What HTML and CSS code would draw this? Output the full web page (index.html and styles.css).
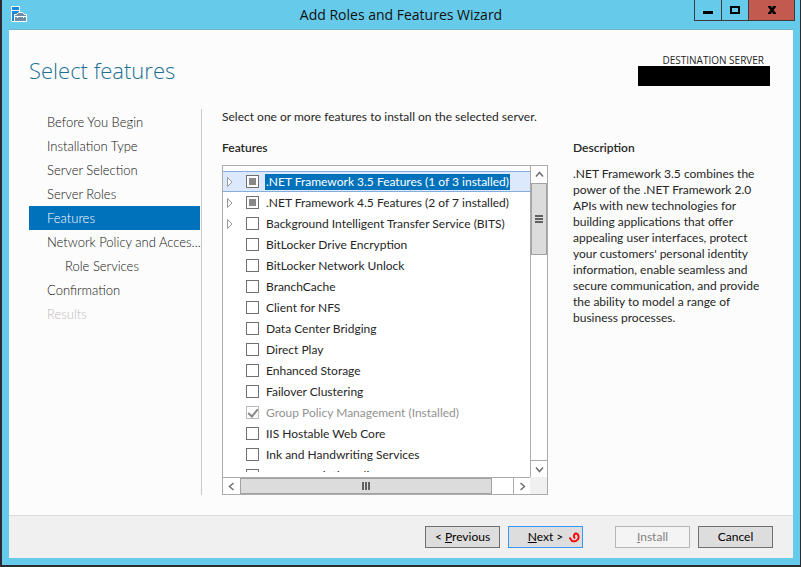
FILE: index.html
```html
<!DOCTYPE html>
<html lang="en">
<head>
    <meta charset="UTF-8">
    <meta name="viewport" content="width=device-width, initial-scale=1.0">
    <title>Add Roles and Features Wizard</title>
    <link rel="stylesheet" href="styles.css">
</head>
<body>
    <div class="window">
        <header class="titlebar">
            <svg class="app-icon" width="16" height="16" viewBox="0 0 16 16">
                <path d="M0.5 0.5H8.5V15.5H0.5Z" fill="#1e86dc" stroke="#fff"/>
                <path d="M1 4.5H8" stroke="#fff"/>
                <path d="M3.5 15.5V8.5H5.5L7.500 6.500H11.500L13.500 8.500H15.5V15.5Z" fill="#6f8ca3" stroke="#fff"/>
                <path d="M4 10.500H15" stroke="#fff"/>
                <path d="M6.5 10V12M12.5 10V12" stroke="#fff"/>
            </svg>
            <h1>Add Roles and Features Wizard</h1>
            <div class="window-buttons">
                <button type="button" aria-label="Minimize">
                    <svg width="10" height="10"><path d="M0 6H10V9H0Z"/></svg>
                </button>
                <button type="button" aria-label="Maximize">
                    <svg width="10" height="10"><path d="M1 2H9V8H1Z" fill="none" stroke="#000" stroke-width="2"/></svg>
                </button>
                <button type="button" class="close" aria-label="Close">
                    <svg width="10" height="10"><path d="M1 1H4L5 3L6 1H9V2L6.500 5L9 8V9H6L5 7L4 9H1V8L3.500 5L1 2Z"/></svg>
                </button>
            </div>
        </header>

        <main class="wizard">
            <div class="page-header">
                <h2>Select features</h2>
                <div class="destination">
                    <span>DESTINATION SERVER</span>
                    <div class="server-name"></div>
                </div>
            </div>

            <div class="columns">
                <nav class="steps">
                    <a href="#">Before You Begin</a>
                    <a href="#">Installation Type</a>
                    <a href="#">Server Selection</a>
                    <a href="#">Server Roles</a>
                    <a href="#" class="active">Features</a>
                    <a href="#">Network Policy and Acces...</a>
                    <a href="#" class="sub">Role Services</a>
                    <a href="#">Confirmation</a>
                    <a href="#" class="disabled">Results</a>
                </nav>

                <section class="features">
                    <p>Select one or more features to install on the selected server.</p>
                    <h3>Features</h3>
                    <div class="list-box">
                        <ul class="feature-list" id="featureList"></ul>
                        <div class="scrollbar vertical">
                            <button type="button" aria-label="Scroll up">
                                <svg width="9" height="9"><path d="M1 6.500L4.500 2.500L8 6.500"/></svg>
                            </button>
                            <div class="thumb"></div>
                            <button type="button" class="end" aria-label="Scroll down">
                                <svg width="9" height="9"><path d="M1 2.500L4.500 6.500L8 2.500"/></svg>
                            </button>
                        </div>
                        <div class="scrollbar horizontal">
                            <button type="button" aria-label="Scroll left">
                                <svg width="9" height="9"><path d="M6.500 1L2.500 4.500L6.500 8"/></svg>
                            </button>
                            <div class="thumb"></div>
                            <button type="button" class="end" aria-label="Scroll right">
                                <svg width="9" height="9"><path d="M2.500 1L6.500 4.500L2.500 8"/></svg>
                            </button>
                        </div>
                        <div class="corner"></div>
                    </div>
                </section>

                <section class="description">
                    <h3>Description</h3>
                    <p>.NET Framework 3.5 combines the power of the .NET Framework 2.0 APIs with new technologies for building applications that offer appealing user interfaces, protect your customers' personal identity information, enable seamless and secure communication, and provide the ability to model a range of business processes.</p>
                </section>
            </div>
        </main>

        <footer class="actions">
            <button type="button">&lt; <u>P</u>revious</button>
            <button type="button" class="default"><u>N</u>ext &gt;
                <svg class="mark" width="11" height="11" viewBox="0 0 11 11"><path d="M0.500 5.500L3 9C6 10 9 8.500 9.500 6C10 3 8 1 6.500 1.500C4.500 2.500 4.500 5 6 6.500"/></svg>
            </button>
            <button type="button" class="install" disabled><u>I</u>nstall</button>
            <button type="button">Cancel</button>
        </footer>
    </div>

    <script>
        const features = [
            { name: ".NET Framework 3.5 Features (1 of 3 installed)", partial: true, expandable: true, selected: true },
            { name: ".NET Framework 4.5 Features (2 of 7 installed)", partial: true, expandable: true },
            { name: "Background Intelligent Transfer Service (BITS)", expandable: true },
            { name: "BitLocker Drive Encryption" },
            { name: "BitLocker Network Unlock" },
            { name: "BranchCache" },
            { name: "Client for NFS" },
            { name: "Data Center Bridging" },
            { name: "Direct Play" },
            { name: "Enhanced Storage" },
            { name: "Failover Clustering" },
            { name: "Group Policy Management (Installed)", installed: true },
            { name: "IIS Hostable Web Core" },
            { name: "Ink and Handwriting Services" },
            { name: "Internet Printing Client" }
        ];

        const featureList = document.getElementById('featureList');

        features.forEach((feature, i) => {
            const row = document.createElement('li');
            if (feature.selected) row.classList.add('selected');
            if (feature.installed) row.classList.add('installed');
            row.innerHTML = `
                <span class="expander">${feature.expandable ? '<svg width="6" height="10"><path d="M0.500 0.500V9.500L5 5Z"/></svg>' : ''}</span>
                <input type="checkbox" id="feature${i}">
                <label for="feature${i}">${feature.name}</label>
            `;
            const box = row.querySelector('input');
            box.indeterminate = !!feature.partial;
            box.checked = !!feature.installed;
            box.disabled = !!feature.installed;
            featureList.appendChild(row);
        });
    </script>
</body>
</html>
```
FILE: styles.css
```css
:root {
    --frame: #66caea;
    --accent: #0072bc;
    --text: #262626;
    --line: #ababab;
}

* {
    box-sizing: border-box;
    margin: 0;
    padding: 0;
}

body {
    height: 100vh;
    padding: 0 1px 2px 2px;
    background-color: #2d2a32;
    font-family: Lato, "Open Sans", sans-serif;
    font-size: 12px;
    line-height: 16px;
    color: var(--text);
}

button {
    font: inherit;
    color: #000;
}

.window {
    display: flex;
    flex-direction: column;
    height: 100%;
    padding: 0 7px 7px;
    background-color: var(--frame);
}

.titlebar {
    display: grid;
    grid-template-columns: 99px 1fr 99px;
    height: 29px;
    flex: none;
}

.app-icon {
    margin: 6px 0 0 2px;
}

.titlebar h1 {
    font-family: "Open Sans", sans-serif;
    font-size: 14px;
    font-weight: normal;
    line-height: 29px;
    text-align: center;
    color: #111;
}

.window-buttons {
    display: flex;
    height: 21px;
    margin-right: -2px;
}

.window-buttons button {
    display: flex;
    align-items: center;
    justify-content: center;
    width: 27px;
    border: 1px solid #3c3c3c;
    border-top: none;
    border-right: none;
    background: none;
}

.window-buttons .close {
    flex: 1;
    border-right: 1px solid #3c3c3c;
    background-color: #c35a50;
}

.wizard {
    display: flex;
    flex-direction: column;
    flex: 1;
    min-height: 0;
    padding: 0 23px 20px 20px;
    border-top: 1px solid #6fb3c9;
    background-color: #fcfcfc;
}

.page-header {
    display: flex;
    justify-content: space-between;
    height: 79px;
    flex: none;
}

.page-header h2 {
    padding-top: 22px;
    font-family: "Open Sans", sans-serif;
    font-size: 22px;
    font-weight: 300;
    line-height: 36px;
    color: #1d7094;
}

.destination {
    padding-top: 24px;
    font-family: "Open Sans", sans-serif;
    font-size: 10px;
    line-height: 12px;
    text-align: right;
}

.destination span {
    padding-right: 6px;
}

.server-name {
    width: 132px;
    height: 20px;
    background-color: #000;
}

.columns {
    display: grid;
    grid-template-columns: 173px 1fr 197px;
    flex: 1;
    min-height: 0;
}

.steps {
    padding: 1px 1px 0 0;
    border-right: 1px solid #c8c8c8;
}

.steps a {
    display: block;
    padding-left: 18px;
    font-size: 13px;
    font-weight: 300;
    line-height: 24px;
    text-decoration: none;
    white-space: nowrap;
    color: #111;
}

.steps .active {
    background-color: var(--accent);
    color: #fff;
}

.steps .sub {
    padding-left: 36px;
}

.steps .disabled {
    color: #bbb;
}

.features {
    display: flex;
    flex-direction: column;
    min-width: 0;
    min-height: 0;
    margin: 0 25px 0 20px;
}

.features p {
    margin-bottom: 15px;
    white-space: nowrap;
}

h3 {
    font-size: 12px;
    font-weight: 600;
    line-height: 16px;
}

.list-box {
    display: grid;
    grid-template-columns: 1fr 17px;
    grid-template-rows: 1fr 17px;
    flex: 1;
    min-height: 0;
    margin-top: 9px;
    border: 1px solid var(--line);
    background-color: #fff;
}

.feature-list {
    overflow: hidden;
    min-height: 0;
    margin: 5px 0;
    list-style: none;
}

.feature-list li {
    display: flex;
    align-items: center;
    height: 21px;
    padding-left: 4px;
    white-space: nowrap;
}

.feature-list .selected {
    border: 1px solid #84acdd;
    border-width: 1px 0;
    background-color: #dce9fc;
}

.expander {
    display: flex;
    width: 19px;
}

.expander path {
    fill: #fff;
    stroke: #999;
}

.feature-list input {
    display: grid;
    place-items: center;
    appearance: none;
    width: 13px;
    height: 13px;
    margin-right: 6px;
    border: 1px solid #707070;
    background-color: #fff;
}

.feature-list input:indeterminate::after {
    content: "";
    width: 7px;
    height: 7px;
    background-color: #888;
}

.feature-list input:checked::after {
    content: "";
    width: 4px;
    height: 8px;
    margin-bottom: 2px;
    border: solid #888;
    border-width: 0 2px 2px 0;
    transform: rotate(40deg);
}

.feature-list input:disabled {
    border-color: #bbb;
}

.feature-list label {
    padding: 0 1px;
}

.selected label {
    background-color: var(--accent);
    color: #fff;
}

.installed label {
    color: #929292;
}

.scrollbar {
    display: flex;
    min-height: 0;
    border: 0 solid var(--line);
}

.vertical {
    flex-direction: column;
    border-left-width: 1px;
}

.horizontal {
    border-top-width: 1px;
}

.scrollbar button {
    display: grid;
    place-items: center;
    flex: 0 0 17px;
    border: 0 solid var(--line);
    background-color: #fff;
}

.scrollbar path {
    fill: none;
    stroke: #707070;
    stroke-width: 1.5;
}

.thumb {
    display: grid;
    place-items: center;
    border: 1px solid #a2a2a2;
    background-color: #dcdcdc;
}

.thumb::after {
    content: "";
    width: 8px;
    height: 8px;
}

.vertical .thumb {
    height: 72px;
}

.vertical .thumb::after {
    background: repeating-linear-gradient(#606060 0 2px, transparent 2px 3px);
}

.horizontal .thumb {
    width: 252px;
}

.horizontal .thumb::after {
    background: repeating-linear-gradient(to right, #606060 0 2px, transparent 2px 3px);
}

.vertical .end {
    margin-top: auto;
    border-top-width: 1px;
}

.horizontal .end {
    margin-left: auto;
    border-left-width: 1px;
}

.corner {
    background-color: #f0f0f0;
}

.description {
    padding-top: 31px;
}

.description p {
    margin-top: 10px;
}

.actions {
    display: flex;
    justify-content: flex-end;
    gap: 8px;
    flex: none;
    padding: 10px 20px;
    border-top: 1px solid #dadada;
    background-color: #f0f0f0;
}

.actions button {
    position: relative;
    width: 75px;
    height: 22px;
    border: 1px solid #707070;
    background-color: #ddd;
}

.actions .default {
    border-color: #3399ff;
}

.actions .mark {
    position: absolute;
    right: 2px;
    top: 5px;
    fill: none;
    stroke: #f40b0b;
    stroke-width: 2;
}

.actions .install {
    margin-left: 24px;
    border-color: #b5b5b5;
    background-color: #f4f4f4;
    color: #838383;
}
```
